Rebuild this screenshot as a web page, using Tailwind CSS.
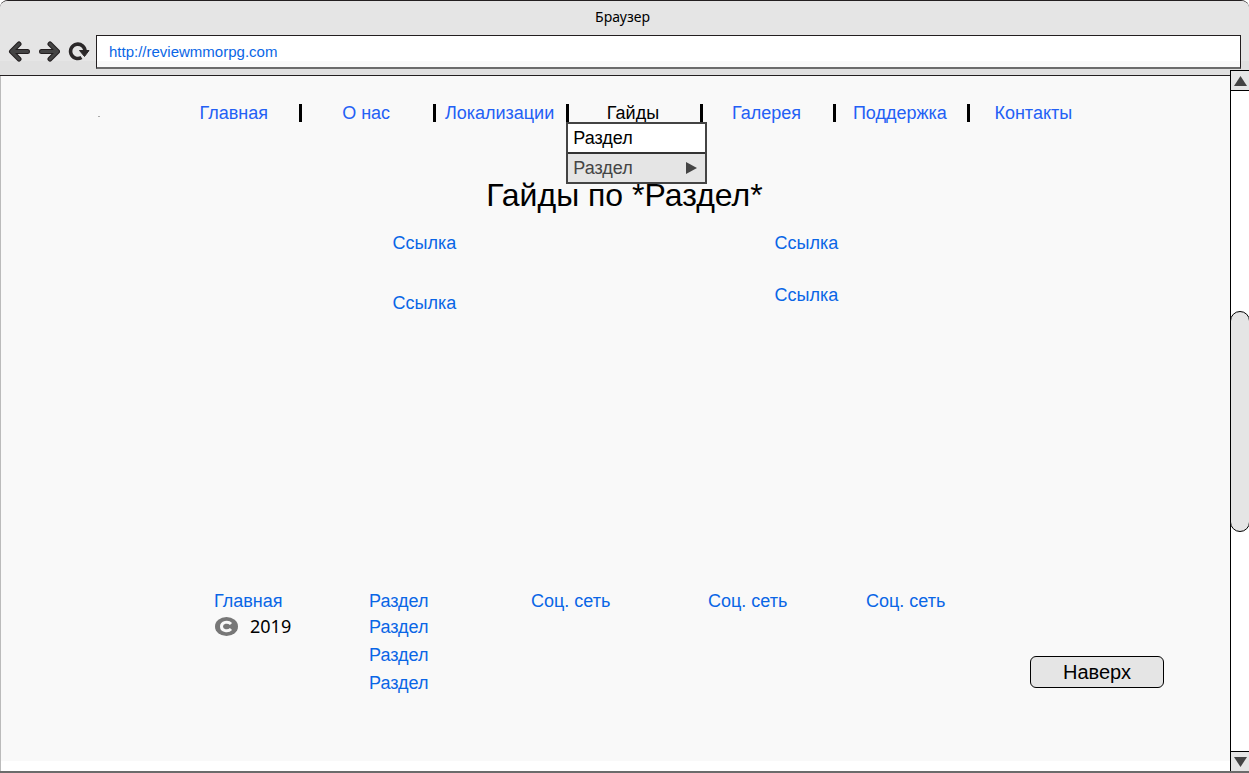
<!DOCTYPE html>
<html lang="ru">
<head>
<meta charset="utf-8">
<meta name="viewport" content="width=device-width, initial-scale=1">
<title>Браузер</title>
<script src="https://cdn.jsdelivr.net/npm/@tailwindcss/browser@4"></script>
</head>
<body class="flex min-h-screen flex-col bg-white font-['Liberation_Sans',Arial,sans-serif] text-black">
<div class="flex flex-1 flex-col overflow-hidden rounded-t-lg border-t border-b-2 border-t-[#231f20] border-b-[#6b6b6b]">
  <header class="border-b border-[#231f20] bg-linear-[to_bottom,#e5e5e5_60px,#e0e0e0_60px]">
    <p class="pt-1.5 pr-1 text-center font-['Noto_Sans',sans-serif] text-[14px] leading-5">Браузер</p>
    <div class="mt-2 flex items-center pr-2 pb-1.5 pl-2">
      <div class="flex w-[88px] gap-2">
        <button type="button" aria-label="Назад" class="h-6 w-[22px]">
          <svg class="h-6 w-[22px]" viewBox="0 0 22 24" fill="none" stroke-linecap="round" stroke-linejoin="round"><path d="M11 4 3.500 11.500 11 19M4 11.500h15.500" stroke="#231f20" stroke-width="5"/><path d="M11 4 3.500 11.500 11 19M4 11.500h15.500" stroke="#444" stroke-width="3"/></svg>
        </button>
        <button type="button" aria-label="Вперёд" class="h-6 w-[22px]">
          <svg class="h-6 w-[22px]" viewBox="0 0 22 24" fill="none" stroke-linecap="round" stroke-linejoin="round"><path d="M12 4 19.500 11.500 12 19M19 11.500H3.500" stroke="#231f20" stroke-width="5"/><path d="M12 4 19.500 11.500 12 19M19 11.500H3.500" stroke="#444" stroke-width="3"/></svg>
        </button>
        <button type="button" aria-label="Обновить" class="h-6 w-[22px]">
          <svg class="h-6 w-[22px]" viewBox="0 0 22 24" fill="none"><path d="M13.500 17.500A7.200 7.200 0 1 1 17 11.500" stroke="#2b2829" stroke-width="3.600"/><path d="M11.500 10.500h9.500L16.500 16.500z" fill="#2b2829" stroke="#2b2829" stroke-linejoin="round"/></svg>
        </button>
      </div>
      <input type="url" aria-label="Адрес" value="http://reviewmmorpg.com" class="h-[34px] min-w-0 flex-1 border border-b-2 border-[#231f20] border-b-[#6b6b6b] bg-linear-[to_bottom,#fff_25px,#f9f9f9_25px] px-3 text-[15px] text-[#0a66e6] outline-none">
    </div>
  </header>

  <div class="flex flex-1 border-l border-[#bbb]">
    <main class="mb-2.5 flex min-w-0 flex-1 flex-col bg-[#f9f9f9] text-[18px] leading-[18px]">
      <div class="flex pt-7">
        <span class="w-[166px] pt-3 pl-[97px]"><span class="block h-px w-0.5 bg-[#aaa]"></span></span>
        <nav aria-label="Главное меню" class="min-w-0 flex-1 pr-[129px]">
          <ul class="grid grid-cols-7 text-center text-[#2360f5]">
            <li><a href="#">Главная</a></li>
            <li class="-ml-px border-l-3 border-black pr-1"><a href="#">О нас</a></li>
            <li class="-ml-px border-l-3 border-black pr-1"><a href="#">Локализации</a></li>
            <li class="relative -ml-px border-l-3 border-black pr-1 text-black">
              <a href="#">Гайды</a>
              <ul class="absolute top-[18px] -left-[3px] z-10 w-[141px] border-2 border-[#444] text-left">
                <li class="border-b-2 border-[#333] bg-white"><a href="#" class="block px-[5px] py-[5px]">Раздел</a></li>
                <li class="bg-[#e5e5e5] text-[#444]"><a href="#" class="flex items-center justify-between py-[5px] pr-2 pl-[5px]">Раздел
                  <svg class="h-3 w-[11px]" viewBox="0 0 11 12" fill="#444" aria-hidden="true"><path d="M0 0l11 6-11 6z"/></svg></a></li>
              </ul>
            </li>
            <li class="-ml-px border-l-3 border-black pr-1"><a href="#">Галерея</a></li>
            <li class="-ml-px border-l-3 border-black pr-1"><a href="#">Поддержка</a></li>
            <li class="-ml-px border-l-3 border-black pr-1"><a href="#">Контакты</a></li>
          </ul>
        </nav>
      </div>

      <h1 class="mt-[53px] pl-[18px] text-center text-[32px] leading-10">Гайды по *Раздел*</h1>

      <div class="mt-[19px] flex justify-center text-[#0a66e6]">
        <ul class="w-[382px] space-y-[42px]">
          <li><a href="#">Ссылка</a></li>
          <li><a href="#">Ссылка</a></li>
        </ul>
        <ul class="w-16 space-y-[34px]">
          <li><a href="#">Ссылка</a></li>
          <li><a href="#">Ссылка</a></li>
        </ul>
      </div>

      <footer class="mt-auto flex pr-[66px] pb-[69px] pl-[213px] text-[#0a66e6]">
        <div class="w-[155px]">
          <a href="#">Главная</a>
          <p class="mt-1.5 flex items-center gap-3 font-['Noto_Sans',sans-serif] text-black">
            <svg class="h-5 w-6" viewBox="0 0 24 20" aria-label="Авторское право" role="img"><ellipse cx="12.500" cy="10.500" rx="11.500" ry="9.500" fill="#777"/><path d="M17 8C14 4.800 7.500 6 7.500 10.500s6.500 5.700 9.500 2.500" fill="none" stroke="#f9f9f9" stroke-width="3"/></svg>
            2019</p>
        </div>
        <ul class="w-[162px]">
          <li class="mb-2"><a href="#">Раздел</a></li>
          <li class="mb-2.5"><a href="#">Раздел</a></li>
          <li class="mb-2.5"><a href="#">Раздел</a></li>
          <li><a href="#">Раздел</a></li>
        </ul>
        <a href="#" class="w-[177px]">Соц. сеть</a>
        <a href="#" class="w-[158px]">Соц. сеть</a>
        <a href="#">Соц. сеть</a>
        <button type="button" class="mt-16 ml-auto h-8 w-[134px] self-start rounded-md border border-black bg-[#e5e5e5] text-[20px] text-black">Наверх</button>
      </footer>
    </main>

    <div class="relative -mt-1.5 flex w-[19px] flex-col border-l border-black bg-white">
      <button type="button" aria-label="Прокрутить вверх" class="flex h-[21px] items-center justify-center border-y border-black bg-[#e5e5e5]">
        <svg class="h-2.5 w-[13px]" viewBox="0 0 13 10" fill="#444"><path d="M6.500 0 13 10H0z"/></svg>
      </button>
      <div class="flex flex-1 flex-col">
        <div class="flex-[221]"></div>
        <div class="-mr-px -ml-px flex-[219] rounded-full border border-black bg-[#e5e5e5]"></div>
        <div class="flex-[220]"></div>
      </div>
      <button type="button" aria-label="Прокрутить вниз" class="flex h-5 items-center justify-center border-t border-black bg-[#e5e5e5]">
        <svg class="h-2.5 w-[13px]" viewBox="0 0 13 10" fill="#444"><path d="M0 0h13L6.500 10z"/></svg>
      </button>
    </div>
  </div>
</div>
</body>
</html>
